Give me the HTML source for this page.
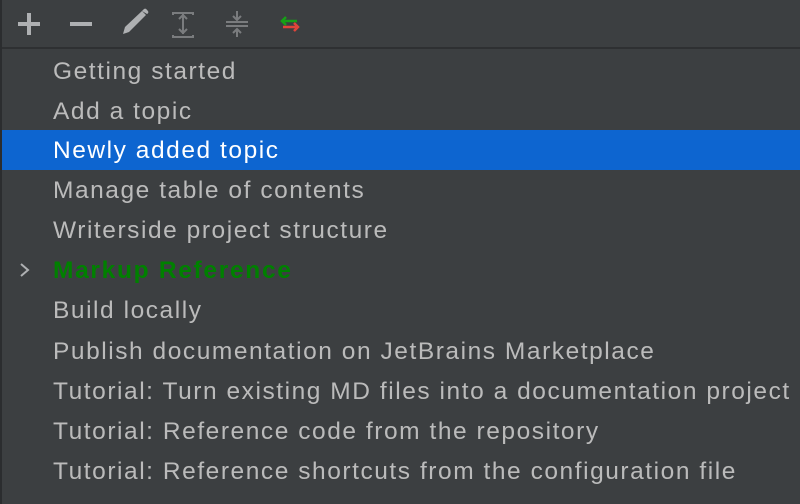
<!DOCTYPE html>
<html><head><style>
body{margin:0;width:800px;height:504px;background:#3c3f41;overflow:hidden;font-family:"Liberation Sans",sans-serif;position:relative}
.lb{position:absolute;left:0;top:0;width:2px;height:504px;background:#2b2d2f}
.tb{position:absolute;left:2px;top:0;right:0;height:47px;background:#3c3f41;border-bottom:2px solid #2e3032}
.tb svg{position:absolute;top:0}
.row{position:absolute;left:2px;right:0;height:40px;line-height:42px;padding-left:51px;font-size:24.5px;letter-spacing:1.55px;color:#bbbbbb;white-space:nowrap}
.sel{background:#0d65d0;color:#fff}
.g{color:#008000;font-weight:bold;letter-spacing:1.7px}
</style></head><body>
<div class="lb"></div>
<div class="tb">
<svg width="320" height="48" viewBox="0 0 320 48">
<g fill="#aeb0b2">
<rect x="16" y="22" width="22" height="4"/><rect x="25" y="13" width="4" height="22"/>
<rect x="68" y="22" width="22" height="4"/>
</g>
<path d="M121 34 L123 27 L140 11 L144 15 L127 32 Z" fill="#aeb0b2"/>
<path d="M140 11 L142 9 Q144 8 145 10 L146 11 Q147 13 145 14 Z" fill="#aeb0b2"/>
<g stroke="#7a7c7e" stroke-width="2" fill="none">
<path d="M170 13h22M170 37h22M171 12v3M191 12v3M171 35v3M191 35v3M181 14v20"/>
<path d="M177 19l4-4 4 4M177 29l4 4 4-4"/>
<path d="M224 22h22M224 26h22M235 11v8M235 29v8M231 16l4 4 4-4M231 33l4-4 4 4"/>
</g>
<path d="M280 21h15M284 17l-4 4 4 4" stroke="#16a016" stroke-width="2.5" fill="none"/>
<path d="M281 27h15M292 23l4 4-4 4" stroke="#e0443a" stroke-width="2.5" fill="none"/>
</svg>
</div>
<div class="row" style="top:51px">Getting started</div>
<div class="row" style="top:91px">Add a topic</div>
<div class="row sel" style="top:130px">Newly added topic</div>
<div class="row" style="top:170px">Manage table of contents</div>
<div class="row" style="top:210px">Writerside project structure</div>
<div class="row g" style="top:250px">Markup Reference</div>
<svg style="position:absolute;left:18px;top:262px" width="14" height="16"><path d="M3 2l7 6-7 6" stroke="#aeb0b2" stroke-width="2" fill="none"/></svg>
<div class="row" style="top:290px">Build locally</div>
<div class="row" style="top:331px">Publish documentation on JetBrains Marketplace</div>
<div class="row" style="top:371px">Tutorial: Turn existing MD files into a documentation project</div>
<div class="row" style="top:411px">Tutorial: Reference code from the repository</div>
<div class="row" style="top:451px">Tutorial: Reference shortcuts from the configuration file</div>
</body></html>
